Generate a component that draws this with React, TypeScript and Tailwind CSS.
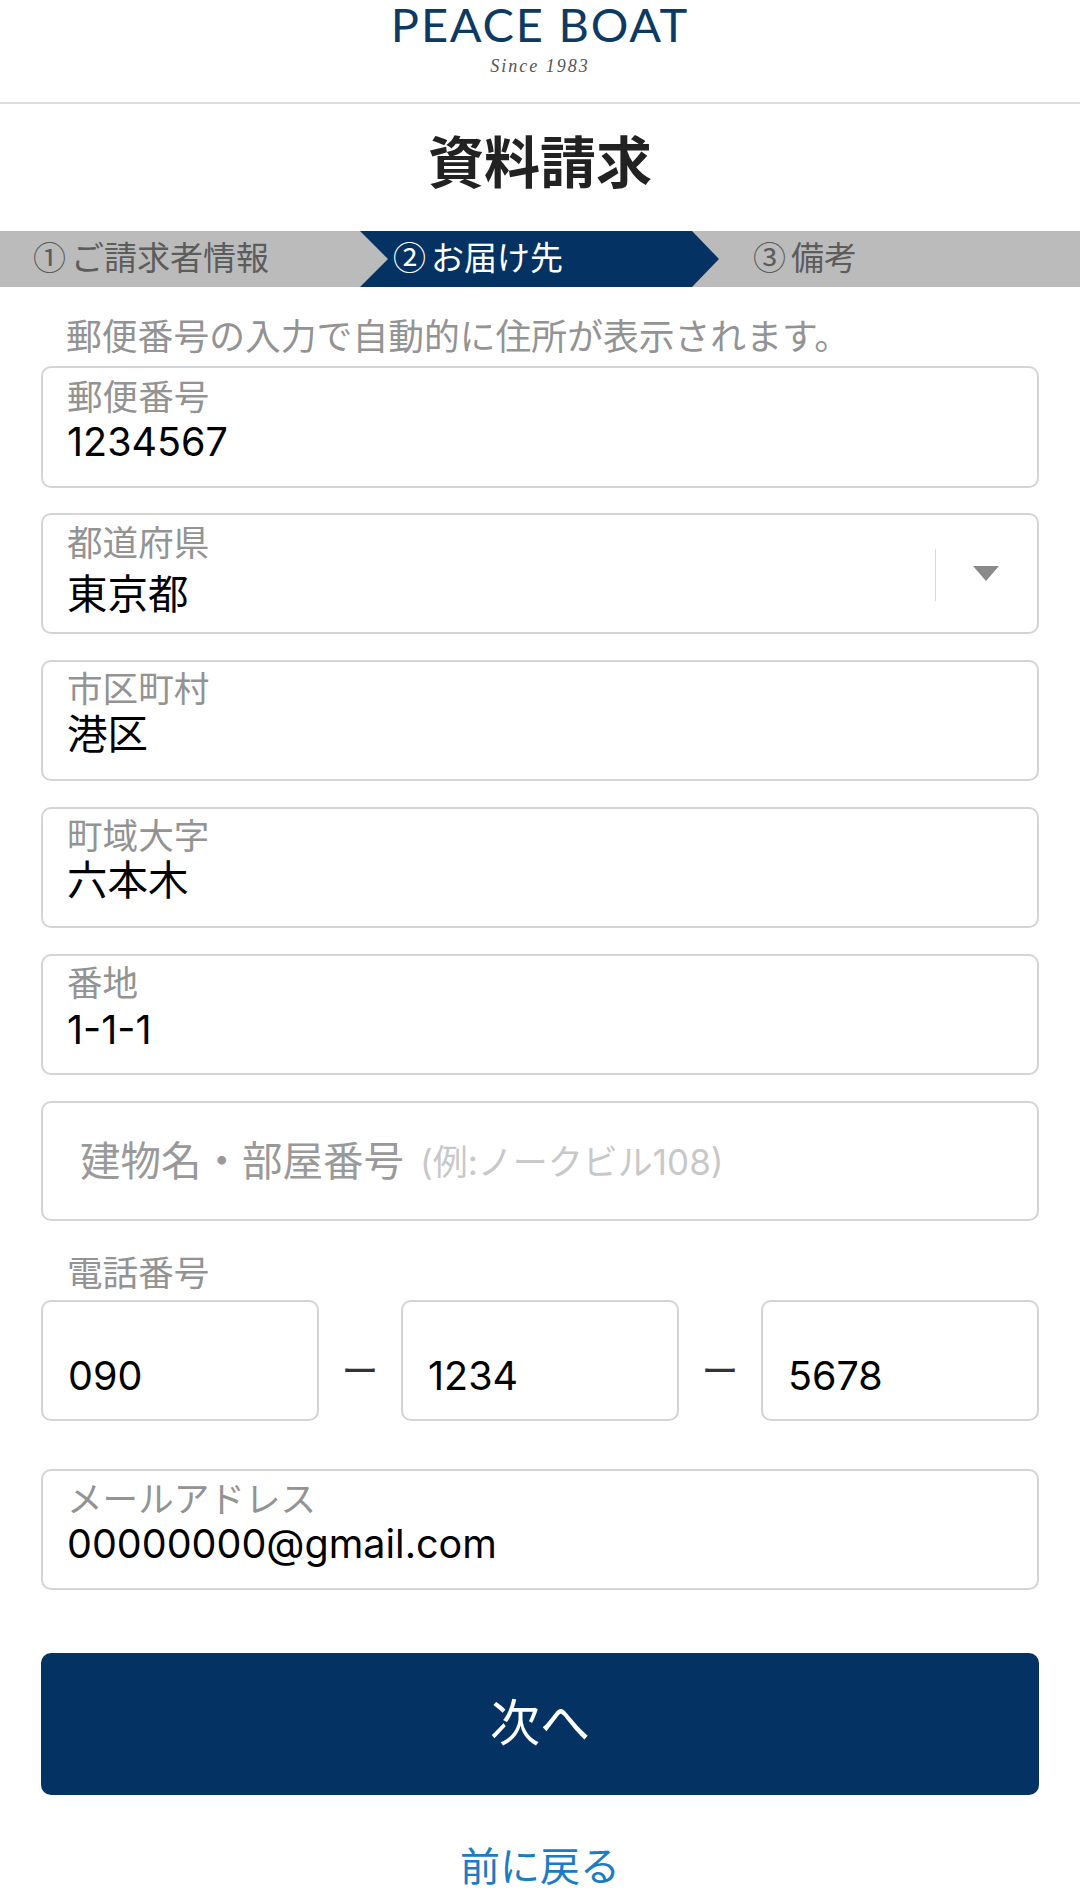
import * as React from 'react';

const sans = "font-['Inter','Noto_Sans_CJK_JP',sans-serif]";
const cjk = "font-['Noto_Sans_CJK_JP',sans-serif]";

function Field({ label, value, className = '', valueClass = '', children }: { label: string; value: string; className?: string; valueClass?: string; children?: React.ReactNode }) {
  return (
    <div className={`relative h-[121px] rounded-[10px] border-2 border-[#d4d4d4] bg-white pl-[24px] ${className}`}>
      <div className="text-[35.6px] leading-[40px] text-[#939393]">{label}</div>
      <div className={`leading-[46px] text-black ${valueClass}`}>{value}</div>
      {children}
    </div>
  );
}

function PhoneBox({ value }: { value: string }) {
  return (
    <div className="h-[121px] w-[278px] rounded-[10px] border-2 border-[#d4d4d4] bg-white pl-[25px] pt-[51px] text-[39.5px] leading-[46px] text-black">
      {value}
    </div>
  );
}

function Dash() {
  return <div className="w-[82px] pt-[23px] text-center text-[37px] leading-[46px] text-[#333]">ー</div>;
}

export default function App() {
  return (
    <div className={`h-[1897px] w-[1080px] overflow-hidden bg-white ${sans}`}>
      <header className="h-[104px] border-b-2 border-[#dcdcdc] text-center">
        <div className="font-['Lato',sans-serif] text-[47px] leading-[48px] tracking-[1.8px] text-[#0d3a63]">PEACE BOAT</div>
        <div className="mt-[8px] font-['Liberation_Serif',serif] text-[18px] italic leading-[20px] tracking-[2px] text-[#555]">Since 1983</div>
      </header>

      <h1 className={`pt-[23px] pb-[41px] text-center text-[56px] font-bold leading-[63px] text-[#222] ${cjk}`}>資料請求</h1>

      <nav className={`flex h-[56px] bg-[#bbbbbb] text-[33px] leading-[50px] ${cjk}`}>
        <div className="w-[360px] pl-[33px] text-[#5c5c5c]">①<span className="ml-[5px]">ご請求者情報</span></div>
        <div className="w-[359px] bg-[#033263] pl-[33px] text-white [clip-path:polygon(0_0,332px_0,359px_50%,332px_100%,0_100%,28px_50%)]">②<span className="ml-[5px]">お届け先</span></div>
        <div className="pl-[34px] text-[#5c5c5c]">③<span className="ml-[5px]">備考</span></div>
      </nav>

      <p className="pl-[66px] pt-[28px] text-[35.8px] leading-[44px] text-[#939393]">郵便番号の入力で自動的に住所が表示されます。</p>

      <main className="px-[41px] pt-[7px]">
        <div className="flex flex-col gap-[26px]">
          <Field label="郵便番号" value="1234567" className="-mb-[1px] h-[122px] pt-[10px]" valueClass="pt-[1px] text-[39.5px]" />
          <Field label="都道府県" value="東京都" className="pt-[9px]" valueClass="pt-[8px] text-[40.5px]">
            <div className="absolute right-[101px] top-[34px] h-[52px] w-px bg-[#d8d8d8]" />
            <svg className="absolute right-[38px] top-[51px]" width="26" height="15" viewBox="0 0 26 15" aria-hidden="true">
              <path d="M0 0h26L13 15z" fill="#8a8a8a" />
            </svg>
          </Field>
          <Field label="市区町村" value="港区" className="pt-[8px]" valueClass="pt-[2px] text-[40.5px]" />
          <Field label="町域大字" value="六本木" className="pt-[8px]" valueClass="pt-[1px] text-[40.5px]" />
          <Field label="番地" value="1-1-1" className="pt-[8px]" valueClass="pt-[3px] text-[39.5px]" />
          <div className="flex h-[120px] items-center rounded-[10px] border-2 border-[#d4d4d4] bg-white pl-[37px] pt-[2px]">
            <span className="text-[40.5px] text-[#999999]">建物名・部屋番号</span>
            <span className="ml-[16px] text-[35px] text-[#c8c8c8]">(例:ノークビル108)</span>
          </div>
        </div>

        <div className="pl-[26px] pt-[32px] text-[35.6px] leading-[41px] text-[#939393]">電話番号</div>
        <div className="mt-[6px] flex items-center">
          <PhoneBox value="090" />
          <Dash />
          <PhoneBox value="1234" />
          <Dash />
          <PhoneBox value="5678" />
        </div>

        <div className="mt-[48px]">
          <Field label="メールアドレス" value="00000000@gmail.com" className="pt-[9px]" valueClass="pt-[1px] text-[39.5px]" />
        </div>

        <button type="button" className={`mt-[63px] block h-[142px] w-full rounded-[10px] bg-[#033263] pb-[10px] text-[50px] text-white ${cjk}`}>
          次へ
        </button>

        <div className="pt-[49px] text-center text-[40px] leading-[46px] text-[#1b7cc4]">前に戻る</div>
      </main>
    </div>
  );
}
